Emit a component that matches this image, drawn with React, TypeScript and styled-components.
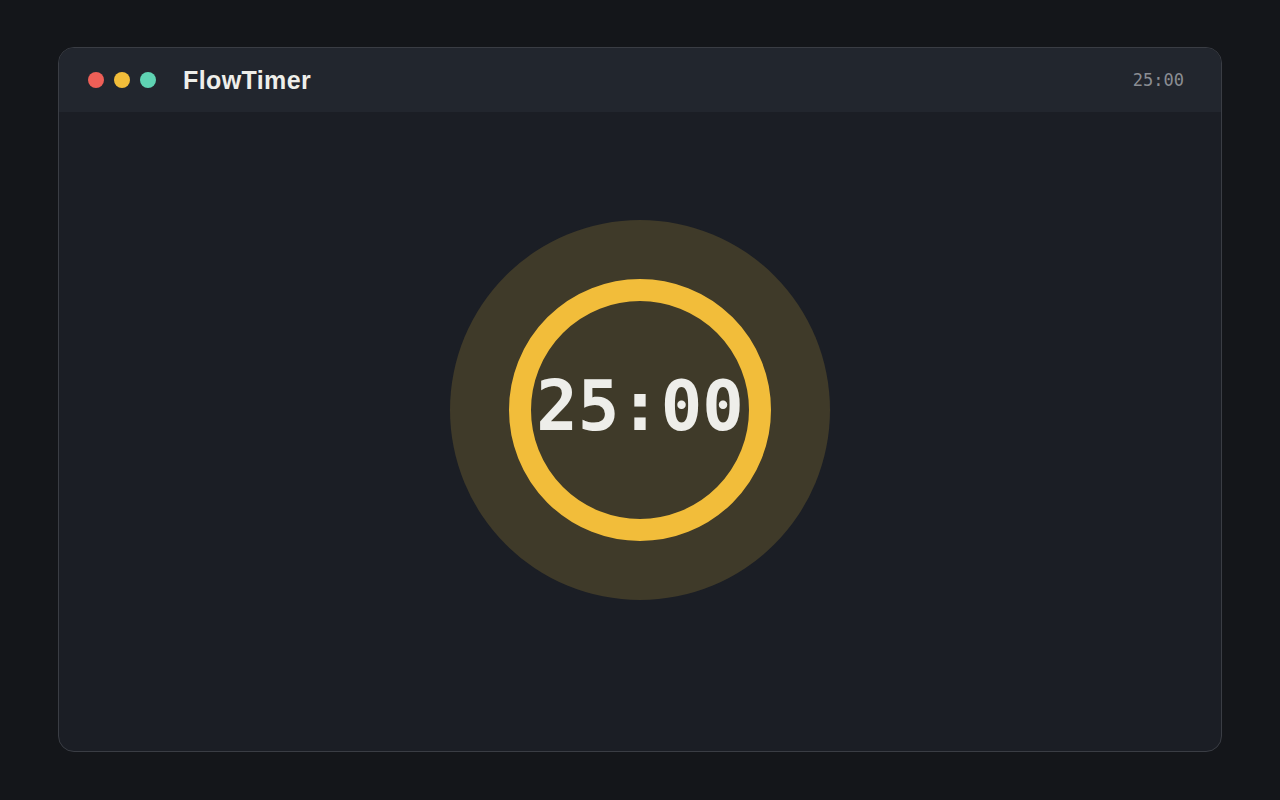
import React from "react";
import styled, { createGlobalStyle } from "styled-components";

// Pomodoro timer window: title bar with traffic lights and a big focus dial

const GlobalStyle = createGlobalStyle`
  html, body {
    margin: 0;
    padding: 0;
    background: #14161a;
  }
  #root {
    width: 1280px;
    height: 800px;
  }
`;

const Page = styled.div`
  width: 1280px;
  height: 800px;
  box-sizing: border-box;
  padding-top: 47px;
  display: flex;
  align-items: flex-start;
  justify-content: center;
`;

const Window = styled.div`
  width: 1164px;
  height: 705px;
  box-sizing: border-box;
  border: 1px solid #3a3d44;
  border-radius: 16px;
  background: #1b1e25;
  overflow: hidden;
  display: flex;
  flex-direction: column;
`;

const TitleBar = styled.header`
  height: 64px;
  flex-shrink: 0;
  background: #22262e;
  display: flex;
  align-items: center;
  padding: 0 37px 0 29px;
`;

const Lights = styled.div`
  display: flex;
  gap: 10px;
`;

const Light = styled.span<{ $color: string }>`
  width: 16px;
  height: 16px;
  border-radius: 50%;
  background: ${(p) => p.$color};
`;

const Title = styled.h1`
  margin: 0 0 0 27px;
  font-family: "Liberation Sans", Arial, sans-serif;
  font-weight: 700;
  font-size: 25px;
  color: #eeeeea;
  letter-spacing: 0.4px;
`;

const Clock = styled.span`
  margin-left: auto;
  font-family: "DejaVu Sans Mono", monospace;
  font-size: 17px;
  color: #8a8d93;
`;

const Body = styled.main`
  flex: 1;
  display: flex;
  justify-content: center;
  align-items: flex-start;
  padding-top: 108px;
`;

const Dial = styled.div`
  width: 380px;
  height: 380px;
  border-radius: 50%;
  background: #3f3a29;
  display: flex;
  align-items: center;
  justify-content: center;
`;

const Ring = styled.div`
  width: 262px;
  height: 262px;
  box-sizing: border-box;
  border-radius: 50%;
  border: 22px solid #f2bd3a;
  display: flex;
  align-items: center;
  justify-content: center;
`;

const Time = styled.span`
  font-family: "DejaVu Sans Mono", monospace;
  font-weight: 700;
  font-size: 69px;
  color: #eeeeea;
  line-height: 1;
  white-space: nowrap;
  margin-bottom: 8px;
`;

const App: React.FC = () => {
  const remaining = "25:00";

  return (
    <>
      <GlobalStyle />
      <Page>
        <Window>
          <TitleBar>
            <Lights>
              <Light $color="#ee5f57" />
              <Light $color="#f2bd3a" />
              <Light $color="#5fd3b3" />
            </Lights>
            <Title>FlowTimer</Title>
            <Clock>{remaining}</Clock>
          </TitleBar>
          <Body>
            <Dial>
              <Ring>
                <Time>{remaining}</Time>
              </Ring>
            </Dial>
          </Body>
        </Window>
      </Page>
    </>
  );
};

export default App;
